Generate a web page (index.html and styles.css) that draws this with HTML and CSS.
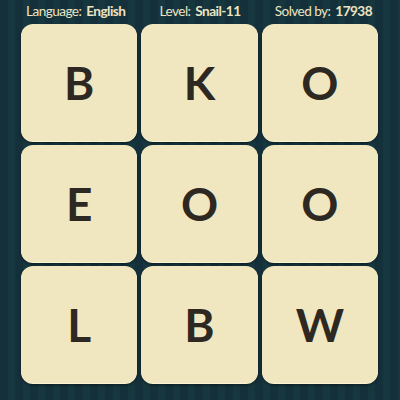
FILE: index.html
```html
<!DOCTYPE html>
<html>
<head>
<meta charset="utf-8">
<link rel="stylesheet" href="styles.css">
</head>
<body>
<div class="page">
  <div class="header">
    <span class="item">Language: <b>English</b></span>
    <span class="item">Level: <b>Snail-11</b></span>
    <span class="item">Solved by: <b>17938</b></span>
  </div>
  <div class="grid">
    <div class="tile">B</div>
    <div class="tile">K</div>
    <div class="tile">O</div>
    <div class="tile">E</div>
    <div class="tile">O</div>
    <div class="tile">O</div>
    <div class="tile">L</div>
    <div class="tile">B</div>
    <div class="tile">W</div>
  </div>
</div>
</body>
</html>
```

FILE: styles.css
```css
html, body {
  margin: 0;
  padding: 0;
}
body {
  width: 400px;
  height: 400px;
  overflow: hidden;
  background-color: #153238;
  background-image: repeating-linear-gradient(90deg, #14303a 0px, #14303a 8px, #17373e 8px, #17373e 15px);
  font-family: Lato, "Open Sans", sans-serif;
}
.page {
  padding: 0 22px 0 21px;
}
.header {
  height: 24px;
  box-sizing: border-box;
  padding: 0 6px 3px 5px;
  display: flex;
  justify-content: space-between;
  align-items: center;
  color: #ece3c2;
  font-size: 13.6px;
  letter-spacing: -0.55px;
  font-weight: 400;
}
.header b {
  font-weight: 700;
  margin-left: 2px;
}
.grid {
  display: grid;
  grid-template-columns: repeat(3, 1fr);
  grid-template-rows: repeat(3, 117px);
  gap: 4px;
}
.tile {
  background: #f0e7c0;
  border-radius: 12px;
  display: flex;
  align-items: center;
  justify-content: center;
  font-size: 46px;
  font-weight: 700;
  color: #2d2822;
  box-shadow: 0 1px 0 #fbf3d2, 0 2px 3px rgba(0,0,0,0.45);
}
```
